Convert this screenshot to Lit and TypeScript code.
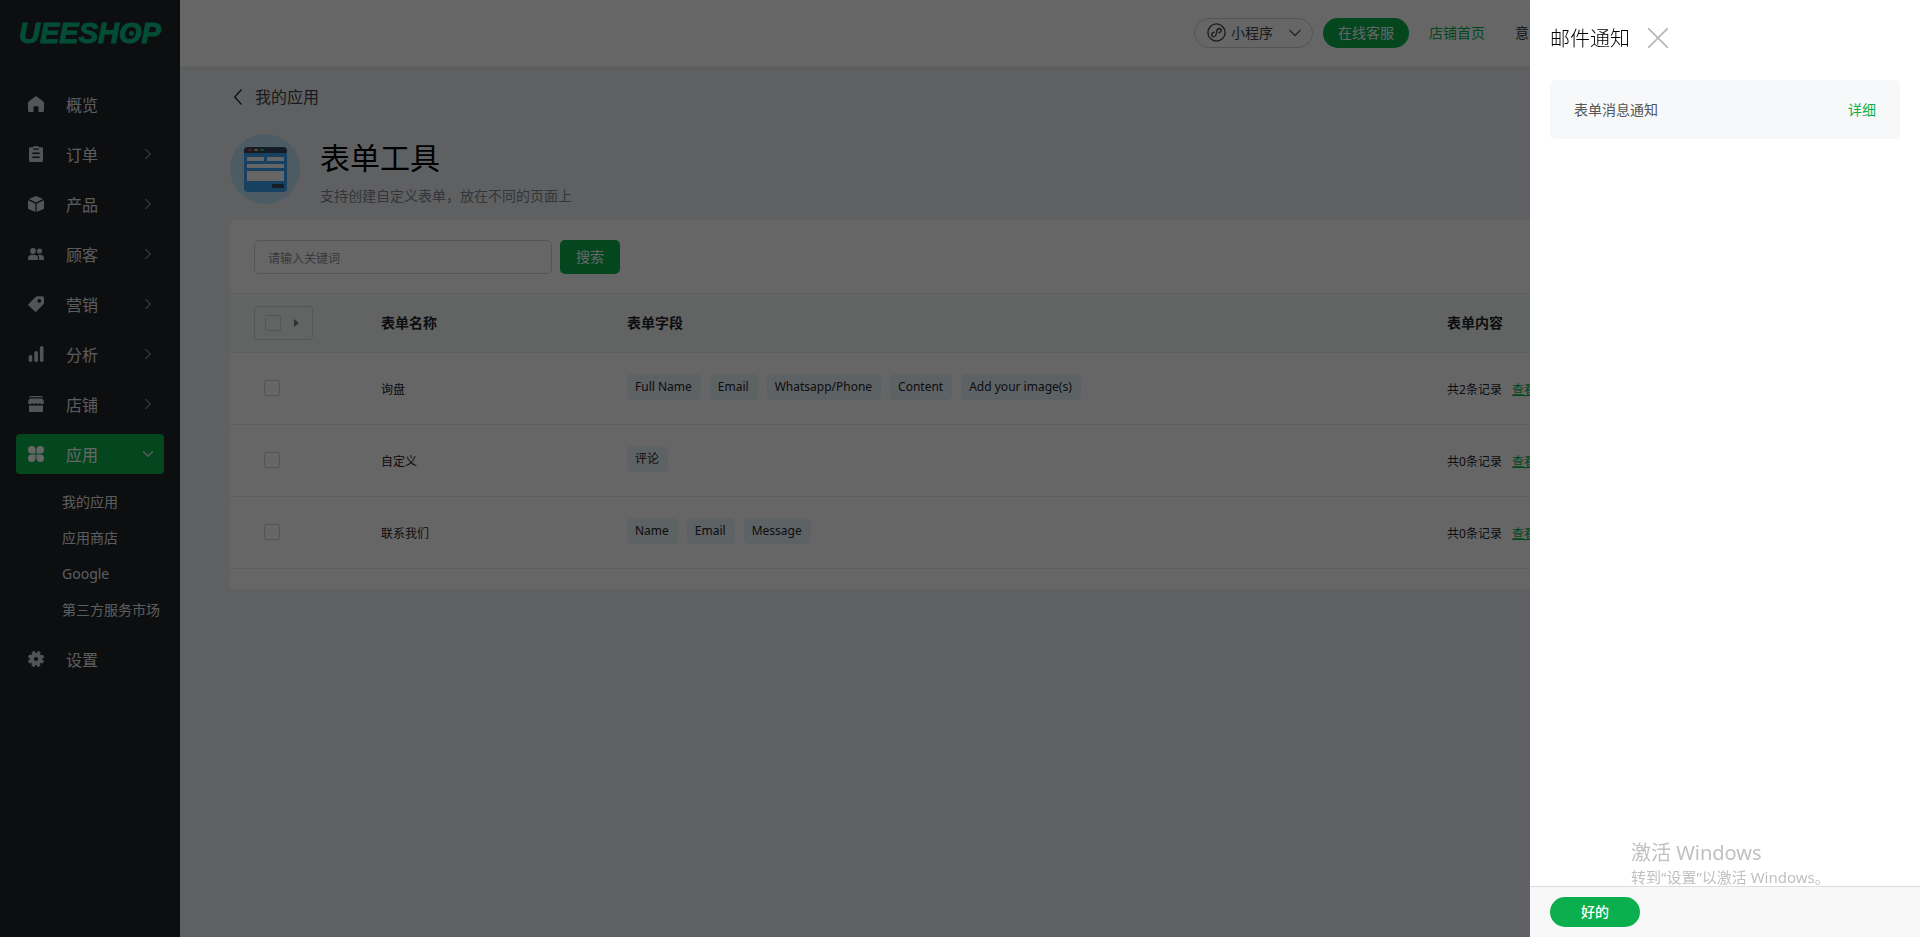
import { LitElement, html, css, svg } from "lit";
import { customElement, state } from "lit/decorators.js";
import { classMap } from "lit/directives/class-map.js";

interface NavItem {
  label: string;
  icon: string;
  arrow: boolean;
  children?: string[];
}

interface FormRow {
  name: string;
  fields: string[];
  records: number;
}

const NAV: NavItem[] = [
  { label: "概览", icon: "home", arrow: false },
  { label: "订单", icon: "order", arrow: true },
  { label: "产品", icon: "box", arrow: true },
  { label: "顾客", icon: "users", arrow: true },
  { label: "营销", icon: "tag", arrow: true },
  { label: "分析", icon: "chart", arrow: true },
  { label: "店铺", icon: "store", arrow: true },
  { label: "应用", icon: "apps", arrow: true, children: ["我的应用", "应用商店", "Google", "第三方服务市场"] },
  { label: "设置", icon: "gear", arrow: false },
];

const ROWS: FormRow[] = [
  { name: "询盘", fields: ["Full Name", "Email", "Whatsapp/Phone", "Content", "Add your image(s)"], records: 2 },
  { name: "自定义", fields: ["评论"], records: 0 },
  { name: "联系我们", fields: ["Name", "Email", "Message"], records: 0 },
];

const ICONS: Record<string, unknown> = {
  home: svg`<path d="M8 0 15.3 5.6Q16 6.200 16 7V14.500Q16 16 14.500 16H10.500V11.500Q10.500 10.300 9.300 10.300H6.700Q5.500 10.300 5.500 11.500V16H1.500Q0 16 0 14.500V7Q0 6.200.7 5.600Z"/>`,
  order: svg`<path fill-rule="evenodd" d="M1 2.500Q1 1.300 2.200 1.200H4.500Q5.500 0 8 0T11.500 1.200H13.800Q15 1.300 15 2.500V14.800Q15 16 13.800 16H2.200Q1 16 1 14.800ZM5.300 2.600V3.700H10.700V2.600ZM4.300 6.600V7.900H11.700V6.600ZM4.300 10.600V11.900H11.700V10.600Z"/>`,
  box: svg`<path d="M8 0 15.200 3.100 8 6.400.8 3.100ZM0 4.300 7.400 7.700V16L.8 13.200Q0 12.800 0 12ZM16 4.300 8.600 7.700V16L15.200 13.200Q16 12.800 16 12Z"/>`,
  users: svg`<circle cx="5" cy="5" r="2.900"/><circle cx="11.500" cy="5" r="2.600"/><path d="M0 14V12Q0 8.800 5 8.800T10 12V14ZM11 14V12Q11 9.900 9.800 8.900 16 8.300 16 12V14Z"/>`,
  tag: svg`<path fill-rule="evenodd" d="M9.300.3H14.500Q16 .3 16 1.800V7Q16 7.700 15.500 8.200L8.400 15.500Q7.600 16.200 6.800 15.500L.5 9.600Q-.3 8.800.5 8L8 .8Q8.500.3 9.300.3ZM11.200 3A1.900 1.900 0 1 0 11.200 6.800 1.900 1.900 0 1 0 11.200 3Z"/>`,
  chart: svg`<rect x=".7" y="9" width="3.600" height="7" rx="1.700"/><rect x="6.300" y="5" width="3.600" height="11" rx="1.700"/><rect x="11.900" y="0" width="3.600" height="16" rx="1.700"/>`,
  store: svg`<path d="M1.500 0H14.500V1.300H1.500ZM1.500 2.500H14.500L16 6.200Q16 8 14.300 8.200 12.800 8.200 12 7.200 10 8.800 8 7.200 6 8.800 4 7.200 3.200 8.200 1.700 8.200 0 8 0 6.200ZM1 9.400H15V14.800Q15 16 13.800 16H2.200Q1 16 1 14.800Z"/>`,
  apps: svg`<path d="M3.700 0Q7.500 0 7.500 3.700V7.500H3.700Q0 7.500 0 3.700T3.700 0ZM12.300 0Q16 0 16 3.700T12.300 7.500H8.500V3.700Q8.500 0 12.300 0ZM3.700 8.500H7.500V12.300Q7.500 16 3.700 16T0 12.300 3.700 8.500ZM8.500 8.500H12.300Q16 8.500 16 12.300T12.300 16 8.500 12.300Z"/>`,
  gear: svg`<g fill="none" stroke="#ced2d6"><circle cx="8" cy="8" r="4.200" stroke-width="4.200"/><circle cx="8" cy="8" r="6.900" stroke-width="2.400" stroke-dasharray="3.200 2.219" transform="rotate(9 8 8)"/></g>`,
};

const base = css`
  * {
    box-sizing: border-box;
  }
  button,
  input {
    font: inherit;
    margin: 0;
  }
  button {
    border: 0;
    padding: 0;
    background: none;
    cursor: pointer;
  }
  a {
    color: inherit;
    text-decoration: none;
  }
  svg {
    display: block;
    flex: none;
  }
`;

@customElement("side-nav")
export class SideNav extends LitElement {
  @state() private open = "应用";

  static styles = [
    base,
    css`
      :host {
        display: block;
        width: 180px;
        flex: none;
        background: #202327;
        color: #e4e6e8;
      }
      .logo {
        display: block;
        height: 84px;
        padding: 13px 0 0 19px;
        font: italic bold 29px/40px "Liberation Sans", Arial, sans-serif;
        color: #09be86;
        -webkit-text-stroke: 1px #09be86;
      }
      .ring {
        position: relative;
      }
      .ring::after {
        content: "";
        position: absolute;
        left: 10px;
        top: 14px;
        width: 5px;
        height: 5px;
        border-radius: 50%;
        background: #09be86;
      }
      .list,
      .sub {
        list-style: none;
        margin: 0;
        padding: 0;
      }
      .list {
        display: flex;
        flex-direction: column;
        gap: 10px;
        padding: 0 16px;
      }
      .item {
        display: flex;
        align-items: center;
        width: 100%;
        height: 40px;
        padding: 0 11px 0 12px;
        border-radius: 4px;
        font-size: 16px;
        color: inherit;
      }
      .item.active {
        background: #0baf4d;
        color: #fff;
      }
      .icon {
        fill: #ced2d6;
      }
      .active .icon {
        fill: #fff;
      }
      .label {
        flex: 1;
        padding: 1px 0 0 22px;
        text-align: left;
      }
      .arrow {
        fill: none;
        stroke: #80858c;
        stroke-width: 1.3;
      }
      .active .arrow {
        stroke: #e4e6e8;
        transform: rotate(90deg);
      }
      .sub {
        padding: 10px 0 1px 46px;
      }
      .link {
        display: block;
        font-size: 14px;
        line-height: 36px;
        white-space: nowrap;
      }
    `,
  ];

  render() {
    return html`
      <a class="logo" href="#" aria-label="UEESHOP">UEESH<span class="ring">O</span>P</a>
      <nav>
        <ul class="list">
          ${NAV.map(
            (n) => html`<li>
              <button class=${classMap({ item: true, active: n.label === this.open })} @click=${() => (this.open = n.label)}>
                <svg class="icon" width="16" height="16" viewBox="0 0 16 16">${ICONS[n.icon]}</svg>
                <span class="label">${n.label}</span>
                ${n.arrow
                  ? html`<svg class="arrow" width="10" height="10" viewBox="0 0 10 10"><path d="M2.300 0 7.300 5 2.300 10" /></svg>`
                  : null}
              </button>
              ${n.children && n.label === this.open
                ? html`<ul class="sub">
                    ${n.children.map((c) => html`<li><a class="link" href="#">${c}</a></li>`)}
                  </ul>`
                : null}
            </li>`
          )}
        </ul>
      </nav>
    `;
  }
}

@customElement("top-bar")
export class TopBar extends LitElement {
  static styles = [
    base,
    css`
      :host {
        display: flex;
        align-items: center;
        justify-content: flex-end;
        height: 67px;
        padding: 0 377px 1px 0;
        background: #fff;
        border-bottom: 1px solid #edf2ee;
        box-shadow: 0 1px 4px rgba(0, 40, 20, 0.06);
        font-size: 14px;
        color: #333;
        white-space: nowrap;
      }
      .mini {
        display: flex;
        align-items: center;
        height: 30px;
        padding: 0 11px 0 12px;
        border: 1px solid #ccd3e0;
        border-radius: 15px;
        color: #444;
      }
      .name {
        padding: 0 16px 0 5px;
      }
      .service {
        width: 86px;
        height: 30px;
        margin: 0 20px 0 10px;
        border-radius: 15px;
        background: #0baf4d;
        color: #fff;
      }
      .store {
        margin-right: 30px;
        color: #0baf4d;
      }
    `,
  ];

  render() {
    return html`
      <button class="mini">
        <svg width="19" height="19" viewBox="0 0 19 19" fill="none" stroke="#444" stroke-width="1.300" stroke-linecap="round">
          <circle cx="9.500" cy="9.500" r="8.600" />
          <path d="M7.300 9.200Q4.500 9.800 4.700 12 5.200 14.100 7.300 13.500 9.100 12.900 9.300 10.700L9.700 8.300Q10.100 5.700 12.300 5.500 14.400 5.800 14.300 7.700 14 9.500 11.700 9.800" />
        </svg>
        <span class="name">小程序</span>
        <svg width="12" height="8" viewBox="0 0 12 8" fill="none" stroke="#555c70" stroke-width="1.300"><path d="M.5 1 6 6.500 11.500 1" /></svg>
      </button>
      <button class="service">在线客服</button>
      <a class="store" href="#">店铺首页</a>
      <a href="#">意见</a>
    `;
  }
}

@customElement("form-table")
export class FormTable extends LitElement {
  static styles = [
    base,
    css`
      :host {
        display: block;
        padding-bottom: 20px;
        border-radius: 5px;
        background: #fff;
        color: #1f2328;
      }
      .search {
        display: flex;
        gap: 8px;
        padding: 20px 24px 19px;
      }
      .keyword {
        width: 298px;
        height: 34px;
        padding: 2px 13px 0;
        border: 1px solid #ccd5e3;
        border-radius: 5px;
        background: #fff;
        font-size: 12px;
        outline: none;
      }
      .keyword::placeholder {
        color: #8a8f9c;
      }
      .submit {
        width: 60px;
        height: 34px;
        border-radius: 5px;
        background: #0baf4d;
        color: #fff;
        font-size: 14px;
      }
      .grid {
        width: 100%;
        table-layout: fixed;
        border-collapse: collapse;
        font-size: 12px;
      }
      .c-check {
        width: 151px;
      }
      .c-name,
      .c-content {
        width: 15%;
      }
      .c-fields {
        width: 50%;
      }
      th {
        height: 59px;
        padding: 0;
        border-top: 1px solid #eceeee;
        border-bottom: 1px solid #e8ecee;
        background: #f6fbf8;
        font-size: 14px;
        font-weight: bold;
        text-align: left;
      }
      td {
        height: 72px;
        padding: 2px 0 0;
        border-bottom: 1px solid #eceeee;
      }
      .first {
        padding-left: 24px;
      }
      td.first {
        padding: 0 0 2px 34px;
      }
      .all {
        display: flex;
        align-items: center;
        justify-content: space-between;
        width: 59px;
        height: 34px;
        padding: 0 13px 0 10px;
        border: 1px solid #ccd5e3;
        border-radius: 4px;
      }
      .check {
        appearance: none;
        display: block;
        width: 16px;
        height: 16px;
        border: 1px solid #ccd5e3;
        border-radius: 2px;
      }
      .check:checked {
        background: #0baf4d;
      }
      .tags {
        display: flex;
        flex-wrap: wrap;
        gap: 9px;
        padding-bottom: 6px;
      }
      .tag {
        padding: 0 9px 0 8px;
        border-radius: 5px;
        background: #e9f4f9;
        line-height: 26px;
      }
      .view {
        margin-left: 7px;
        color: #0baf4d;
        text-decoration: underline;
      }
    `,
  ];

  render() {
    return html`
      <form class="search" @submit=${(e: Event) => e.preventDefault()}>
        <input class="keyword" type="text" placeholder="请输入关键词" aria-label="请输入关键词" />
        <button class="submit" type="submit">搜索</button>
      </form>
      <table class="grid">
        <colgroup>
          <col class="c-check" />
          <col class="c-name" />
          <col class="c-fields" />
          <col class="c-content" />
          <col />
        </colgroup>
        <thead>
          <tr>
            <th class="first">
              <div class="all">
                <input class="check" type="checkbox" aria-label="全选" />
                <svg width="5" height="8" viewBox="0 0 5 8" fill="#737a87"><path d="M0 0 5 4 0 8Z" /></svg>
              </div>
            </th>
            <th>表单名称</th>
            <th>表单字段</th>
            <th>表单内容</th>
            <th></th>
          </tr>
        </thead>
        <tbody>
          ${ROWS.map(
            (r) => html`<tr>
              <td class="first"><input class="check" type="checkbox" aria-label=${r.name} /></td>
              <td>${r.name}</td>
              <td><div class="tags">${r.fields.map((f) => html`<span class="tag">${f}</span>`)}</div></td>
              <td>共${r.records}条记录 <a class="view" href="#">查看</a></td>
              <td></td>
            </tr>`
          )}
        </tbody>
      </table>
    `;
  }
}

@customElement("notice-drawer")
export class NoticeDrawer extends LitElement {
  static styles = [
    base,
    css`
      :host {
        position: fixed;
        inset: 0;
        display: flex;
        justify-content: flex-end;
        background: rgba(0, 0, 0, 0.6);
      }
      .panel {
        position: relative;
        display: flex;
        flex-direction: column;
        width: 390px;
        background: #fff;
        box-shadow: 0 0 2px rgba(64, 120, 160, 0.6);
        color: #1f2328;
      }
      .head {
        display: flex;
        align-items: center;
        gap: 18px;
        padding: 22px 20px 26px;
      }
      .title {
        margin: 0;
        padding-top: 2px;
        font-size: 20px;
        font-weight: 300;
        line-height: 30px;
        color: #000;
      }
      .body {
        flex: 1;
        padding: 0 20px;
      }
      .row {
        display: flex;
        align-items: center;
        justify-content: space-between;
        height: 59px;
        padding: 0 24px;
        border-radius: 5px;
        background: #f6f8fa;
        font-size: 14px;
        color: #555;
      }
      .detail {
        color: #0baf4d;
      }
      .foot {
        padding: 10px 20px;
        border-top: 1px solid #ddd;
        background: #f8f8f8;
      }
      .ok {
        display: block;
        width: 90px;
        height: 30px;
        border-radius: 15px;
        background: #0baf4d;
        color: #fff;
        font-size: 14px;
        font-weight: 500;
      }
      .mark {
        position: absolute;
        left: 101px;
        bottom: 50px;
        color: #c0c0c0;
        white-space: nowrap;
        pointer-events: none;
      }
      .big {
        margin: 0;
        font-size: 20px;
        line-height: 28px;
      }
      .small {
        margin: 0;
        font-size: 15px;
        line-height: 20px;
      }
    `,
  ];

  render() {
    return html`
      <section class="panel" role="dialog" aria-label="邮件通知">
        <header class="head">
          <h2 class="title">邮件通知</h2>
          <button aria-label="关闭">
            <svg width="20" height="20" viewBox="0 0 20 20" fill="none" stroke="#b5b5b5" stroke-width="1.600"><path d="M0 0 20 20M20 0 0 20" /></svg>
          </button>
        </header>
        <div class="body">
          <div class="row"><span>表单消息通知</span><a class="detail" href="#">详细</a></div>
        </div>
        <footer class="foot"><button class="ok">好的</button></footer>
        <div class="mark">
          <p class="big">激活 Windows</p>
          <p class="small">转到“设置”以激活 Windows。</p>
        </div>
      </section>
    `;
  }
}

@customElement("app-root")
export class AppRoot extends LitElement {
  static styles = [
    base,
    css`
      :host {
        display: flex;
        min-height: 100vh;
        background: #edf0f5;
        font-family: "Noto Sans", "Noto Sans CJK SC", sans-serif;
        font-size: 14px;
        line-height: 20px;
      }
      .main {
        flex: 1;
        min-width: 0;
      }
      .page {
        padding: 20px 50px;
      }
      .back {
        display: flex;
        align-items: center;
        gap: 13px;
        padding-left: 4px;
        font-size: 16px;
        color: #444;
      }
      .intro {
        display: flex;
        align-items: center;
        gap: 20px;
        padding: 27px 0 16px;
      }
      .name {
        margin: 0;
        padding: 4px 0 10px;
        font-size: 30px;
        font-weight: normal;
        line-height: 40px;
        color: #000;
      }
      .desc {
        margin: 0;
        line-height: 16px;
        color: #81868f;
      }
    `,
  ];

  render() {
    return html`
      <side-nav></side-nav>
      <div class="main">
        <top-bar></top-bar>
        <main class="page">
          <a class="back" href="#">
            <svg width="8" height="16" viewBox="0 0 8 16" fill="none" stroke="#333" stroke-width="1.500"><path d="M7.500.5.8 8 7.500 15.500" /></svg>
            我的应用
          </a>
          <div class="intro">
            <svg width="70" height="70" viewBox="0 0 70 70">
              <circle cx="35" cy="35" r="35" fill="#c0e4fa" />
              <rect x="14" y="13" width="43" height="45" rx="4" fill="#3aa0f3" />
              <path d="M14 19V17Q14 13 18 13H53Q57 13 57 17V19Z" fill="#38465c" />
              <rect x="18" y="15" width="4" height="2" rx="1" fill="#e0483e" />
              <rect x="24" y="15" width="4" height="2" rx="1" fill="#f2c41c" />
              <rect x="30" y="15" width="4" height="2" rx="1" fill="#45b06a" />
              <path d="M17 23H34V27H17ZM37 23H54V27H37ZM17 30H54V34H17ZM17 37H54V47H17Z" fill="#fff" />
              <rect x="42" y="50" width="12" height="4" rx="1" fill="#38465c" />
            </svg>
            <div>
              <h1 class="name">表单工具</h1>
              <p class="desc">支持创建自定义表单，放在不同的页面上</p>
            </div>
          </div>
          <form-table></form-table>
        </main>
      </div>
      <notice-drawer></notice-drawer>
    `;
  }
}
